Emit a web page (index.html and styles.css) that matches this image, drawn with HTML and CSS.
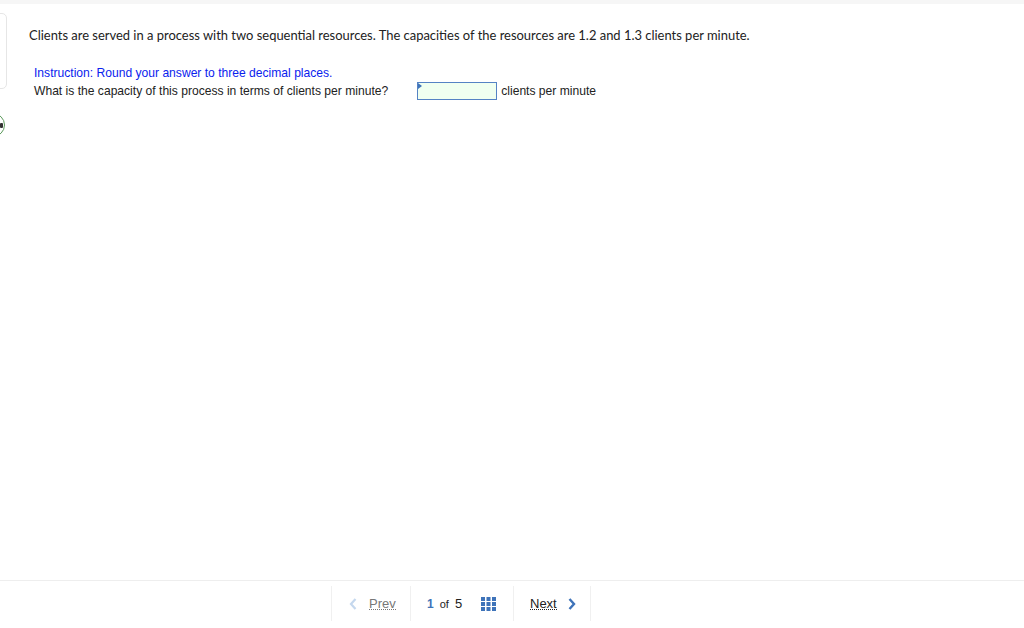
FILE: index.html
```html
<!DOCTYPE html>
<html>
<head>
<meta charset="utf-8">
<link rel="stylesheet" href="styles.css">
</head>
<body>
<div class="topstrip"></div>
<div class="side-card"></div>
<div class="side-circle"><span class="mark"></span></div>
<main class="content">
  <p class="lead">Clients are served in a process with two sequential resources. The capacities of the resources are 1.2 and 1.3 clients per minute.</p>
  <div class="question">
    <div class="instruction">Instruction: Round your answer to three decimal places.</div>
    <div class="ask">
      <span class="ask-text">What is the capacity of this process in terms of clients per minute?</span>
      <span class="answer"><span class="flag"></span></span>
      <span class="unit">clients per minute</span>
    </div>
  </div>
</main>
<footer class="footer">
  <nav class="pager">
    <div class="seg prev">
      <svg width="8" height="12" viewBox="0 0 8 12"><path d="M6.5 1 L2 6 L6.5 11" fill="none" stroke="#c5d8ee" stroke-width="2.2"/></svg>
      <span class="link">Prev</span>
    </div>
    <div class="seg count">
      <b class="cur">1</b><span class="of">of</span><span class="tot">5</span>
      <svg class="grid" width="15" height="14" viewBox="0 0 15 14">
        <g fill="#3e73b9">
          <rect x="0" y="0" width="4" height="4"/><rect x="5.5" y="0" width="4" height="4"/><rect x="11" y="0" width="4" height="4"/>
          <rect x="0" y="5" width="4" height="4"/><rect x="5.5" y="5" width="4" height="4"/><rect x="11" y="5" width="4" height="4"/>
          <rect x="0" y="10" width="4" height="4"/><rect x="5.5" y="10" width="4" height="4"/><rect x="11" y="10" width="4" height="4"/>
        </g>
      </svg>
    </div>
    <div class="seg next">
      <span class="link">Next</span>
      <svg width="8" height="12" viewBox="0 0 8 12"><path d="M1.5 1 L6 6 L1.5 11" fill="none" stroke="#3e73b9" stroke-width="2.4"/></svg>
    </div>
  </nav>
</footer>
</body>
</html>
```

FILE: styles.css
```css
html, body {
  margin: 0;
  padding: 0;
  background: #fff;
  width: 1024px;
  height: 628px;
  overflow: hidden;
  position: relative;
}
body {
  font-family: "Liberation Sans", Arial, sans-serif;
  color: #222;
}
.topstrip {
  height: 4px;
  background: #f6f6f6;
}
.side-card {
  position: absolute;
  left: -20px;
  top: 13px;
  width: 25px;
  height: 74px;
  border: 1px solid #e6e6e6;
  border-radius: 5px;
  background: #fff;
}
.side-circle {
  position: absolute;
  left: -19px;
  top: 113px;
  width: 22px;
  height: 22px;
  border: 1px solid #5b9a5b;
  border-radius: 50%;
  background: #fff;
}
.mark {
  position: absolute;
  right: 1px;
  top: 9px;
  width: 3px;
  height: 5px;
  background: #333;
  border-radius: 1px;
}
.content {
  padding: 23px 0 0 29px;
}
.lead {
  margin: 0;
  font-family: "Lato", "Open Sans", sans-serif;
  font-size: 12.95px;
  line-height: 16px;
  color: #222;
}
.question {
  padding: 23px 0 0 5px;
  font-size: 12.1px;
}
.instruction {
  color: #0a22ee;
  line-height: 15px;
}
.ask {
  display: flex;
  align-items: center;
  margin-top: 1px;
}
.ask-text {
  color: #222;
}
.answer {
  position: relative;
  width: 78px;
  height: 16px;
  margin-left: 29px;
  border: 1px solid #5583c4;
  background: #f0fff0;
}
.flag {
  position: absolute;
  left: 0;
  top: 0;
  width: 0;
  height: 0;
  border-top: 3px solid transparent;
  border-bottom: 3px solid transparent;
  border-left: 4px solid #3e73b9;
}
.unit {
  margin-left: 4px;
}
.footer {
  position: absolute;
  left: 0;
  right: 0;
  top: 580px;
  bottom: 0;
  border-top: 1px solid #eeeeee;
}
.pager {
  display: flex;
  justify-content: center;
  margin-top: 5px;
  padding-right: 102px;
  height: 35px;
  font-size: 13px;
}
.seg {
  display: flex;
  align-items: center;
  border-left: 1px solid #f0f0f0;
  box-sizing: border-box;
}
.prev {
  width: 79px;
  padding-left: 17px;
  gap: 12px;
}
.prev .link {
  color: #777;
  border-bottom: 1px dotted #777;
  line-height: 11px;
}
.count {
  width: 103px;
  padding-left: 16px;
  font-size: 12px;
}
.cur {
  color: #3e73b9;
}
.of {
  color: #222;
  margin-left: 6px;
  font-size: 11px;
}
.tot {
  color: #222;
  margin-left: 6px;
  font-size: 13px;
}
.grid {
  margin-left: 19px;
}
.next {
  width: 78px;
  padding-left: 16px;
  gap: 11px;
  border-right: 1px solid #f0f0f0;
}
.next .link {
  color: #222;
  border-bottom: 1px dotted #222;
  line-height: 11px;
}
```
